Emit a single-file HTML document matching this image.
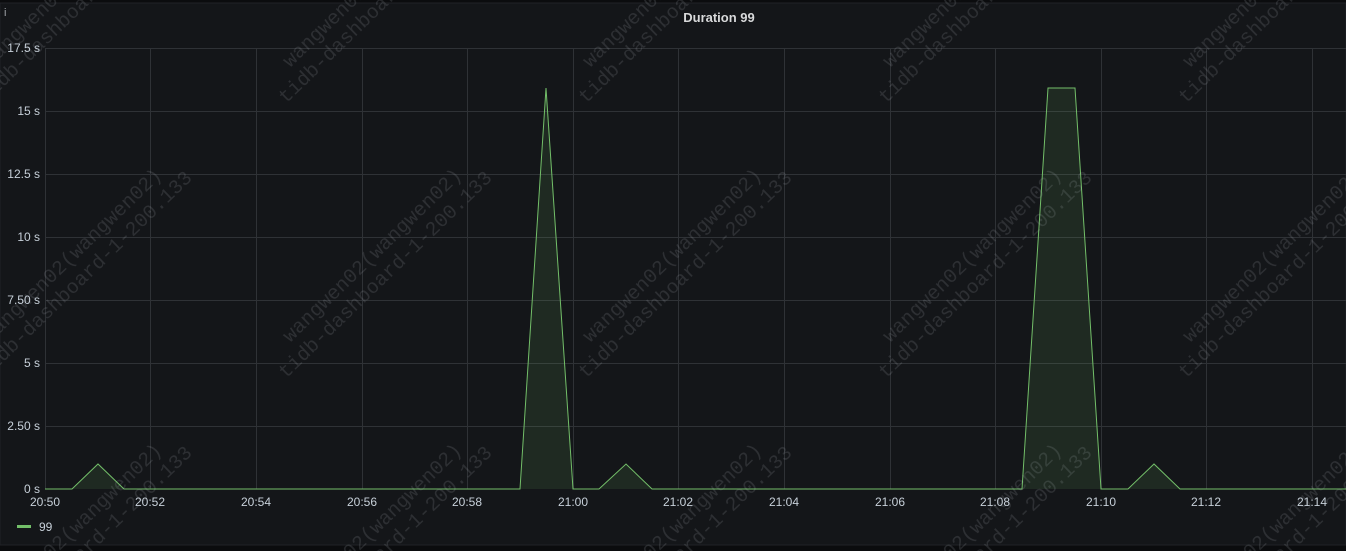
<!DOCTYPE html>
<html><head><meta charset="utf-8"><style>
html,body{margin:0;padding:0;background:#0b0c0e;overflow:hidden;}
body{width:1346px;height:551px;overflow:hidden;position:relative;font-family:"Liberation Sans",sans-serif;}
svg{display:block;}
</style></head><body>
<svg width="1346" height="551" viewBox="0 0 1346 551" style="position:absolute;left:0;top:0;overflow:hidden">
<rect x="0" y="0" width="1346" height="551" fill="#0b0c0e"/>
<rect x="0" y="3" width="1346" height="542" fill="#141619" stroke="#202226" stroke-width="1"/>
<text x="4" y="16" fill="#9fa3a9" font-size="11" font-family="Liberation Sans">i</text>
<text x="719" y="22" fill="#d8d9da" font-size="13" font-weight="bold" text-anchor="middle">Duration 99</text>
<g stroke="#2f3236" stroke-width="1">
<line x1="45" y1="48.5" x2="1346" y2="48.5"/>
<line x1="45" y1="111.5" x2="1346" y2="111.5"/>
<line x1="45" y1="174.5" x2="1346" y2="174.5"/>
<line x1="45" y1="237.5" x2="1346" y2="237.5"/>
<line x1="45" y1="300.5" x2="1346" y2="300.5"/>
<line x1="45" y1="363.5" x2="1346" y2="363.5"/>
<line x1="45" y1="426.5" x2="1346" y2="426.5"/>
<line x1="45.5" y1="48" x2="45.5" y2="489"/>
<line x1="150.5" y1="48" x2="150.5" y2="489"/>
<line x1="256.5" y1="48" x2="256.5" y2="489"/>
<line x1="362.5" y1="48" x2="362.5" y2="489"/>
<line x1="467.5" y1="48" x2="467.5" y2="489"/>
<line x1="573.5" y1="48" x2="573.5" y2="489"/>
<line x1="678.5" y1="48" x2="678.5" y2="489"/>
<line x1="784.5" y1="48" x2="784.5" y2="489"/>
<line x1="890.5" y1="48" x2="890.5" y2="489"/>
<line x1="995.5" y1="48" x2="995.5" y2="489"/>
<line x1="1101.5" y1="48" x2="1101.5" y2="489"/>
<line x1="1206.5" y1="48" x2="1206.5" y2="489"/>
<line x1="1312.5" y1="48" x2="1312.5" y2="489"/>
</g>
<g fill="#c7d0d9" font-size="12" text-anchor="end">
<text x="40" y="52">17.5 s</text><text x="40" y="115">15 s</text><text x="40" y="178">12.5 s</text>
<text x="40" y="241">10 s</text><text x="40" y="304">7.50 s</text><text x="40" y="367">5 s</text>
<text x="40" y="430">2.50 s</text><text x="40" y="493">0 s</text>
</g>
<g fill="#c7d0d9" font-size="12" text-anchor="middle">
<text x="45" y="506">20:50</text><text x="150" y="506">20:52</text><text x="256" y="506">20:54</text>
<text x="362" y="506">20:56</text><text x="467" y="506">20:58</text><text x="573" y="506">21:00</text>
<text x="678" y="506">21:02</text><text x="784" y="506">21:04</text><text x="890" y="506">21:06</text>
<text x="995" y="506">21:08</text><text x="1101" y="506">21:10</text><text x="1206" y="506">21:12</text>
<text x="1312" y="506">21:14</text>
</g>
<path d="M45,489 L72,489 L98,464 L124,489 L520,489 L546,88 L573,489 L599,489 L626,464 L652,489 L1022,489 L1048,88 L1075,88 L1101,489 L1128,489 L1154,464 L1180,489 L1346,489 Z" fill="rgba(115,191,105,0.12)" stroke="none"/>
<polyline points="45,489 72,489 98,464 124,489 520,489 546,88 573,489 599,489 626,464 652,489 1022,489 1048,88 1075,88 1101,489 1128,489 1154,464 1180,489 1346,489" fill="none" stroke="#73bf69" stroke-width="1"/>
<rect x="17" y="525" width="14" height="3" fill="#73bf69"/>
<text x="39" y="531" fill="#c7d0d9" font-size="12">99</text>
<g fill="rgba(200,205,210,0.14)" font-family="Liberation Mono" font-size="20">
<g transform="translate(290,68) rotate(-44)"><text>wangwen02(wangwen02)</text><text x="-28" y="23">tidb-dashboard-1-200.133</text></g>
<g transform="translate(590,68) rotate(-44)"><text>wangwen02(wangwen02)</text><text x="-28" y="23">tidb-dashboard-1-200.133</text></g>
<g transform="translate(890,68) rotate(-44)"><text>wangwen02(wangwen02)</text><text x="-28" y="23">tidb-dashboard-1-200.133</text></g>
<g transform="translate(1190,68) rotate(-44)"><text>wangwen02(wangwen02)</text><text x="-28" y="23">tidb-dashboard-1-200.133</text></g>
<g transform="translate(-10,68) rotate(-44)"><text>wangwen02(wangwen02)</text><text x="-28" y="23">tidb-dashboard-1-200.133</text></g>
<g transform="translate(-10,343) rotate(-44)"><text>wangwen02(wangwen02)</text><text x="-28" y="23">tidb-dashboard-1-200.133</text></g>
<g transform="translate(290,343) rotate(-44)"><text>wangwen02(wangwen02)</text><text x="-28" y="23">tidb-dashboard-1-200.133</text></g>
<g transform="translate(590,343) rotate(-44)"><text>wangwen02(wangwen02)</text><text x="-28" y="23">tidb-dashboard-1-200.133</text></g>
<g transform="translate(890,343) rotate(-44)"><text>wangwen02(wangwen02)</text><text x="-28" y="23">tidb-dashboard-1-200.133</text></g>
<g transform="translate(1190,343) rotate(-44)"><text>wangwen02(wangwen02)</text><text x="-28" y="23">tidb-dashboard-1-200.133</text></g>
<g transform="translate(-10,618) rotate(-44)"><text>wangwen02(wangwen02)</text><text x="-28" y="23">tidb-dashboard-1-200.133</text></g>
<g transform="translate(290,618) rotate(-44)"><text>wangwen02(wangwen02)</text><text x="-28" y="23">tidb-dashboard-1-200.133</text></g>
<g transform="translate(590,618) rotate(-44)"><text>wangwen02(wangwen02)</text><text x="-28" y="23">tidb-dashboard-1-200.133</text></g>
<g transform="translate(890,618) rotate(-44)"><text>wangwen02(wangwen02)</text><text x="-28" y="23">tidb-dashboard-1-200.133</text></g>
<g transform="translate(1190,618) rotate(-44)"><text>wangwen02(wangwen02)</text><text x="-28" y="23">tidb-dashboard-1-200.133</text></g>
</g>
</svg>
</body></html>
